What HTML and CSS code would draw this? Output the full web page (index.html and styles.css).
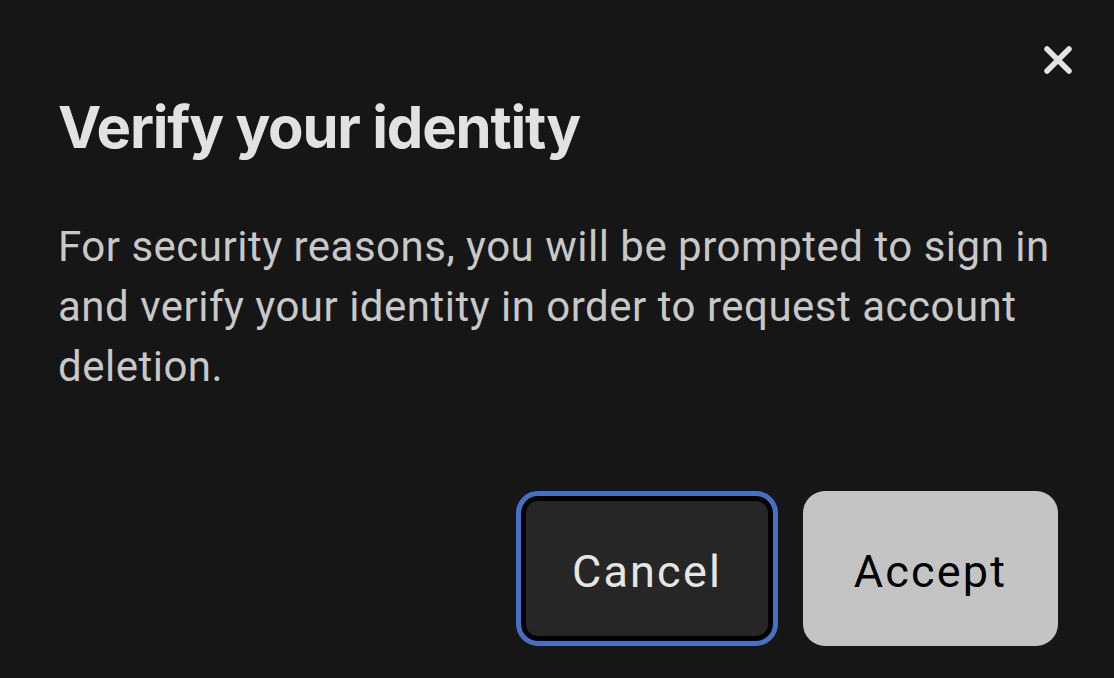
FILE: index.html
```html
<!DOCTYPE html>
<html lang="en">
<head>
<meta charset="utf-8">
<title>Verify your identity</title>
<link rel="stylesheet" href="styles.css">
</head>
<body>
<div class="dialog" role="dialog" aria-labelledby="dlg-title">
  <div class="dialog-header">
    <button class="close-btn" aria-label="Close">
      <svg viewBox="0 0 30 30" width="30" height="30" aria-hidden="true">
        <path d="M4 4 L26 26 M26 4 L4 26" stroke="currentColor" stroke-width="5.5" stroke-linecap="round" fill="none"/>
      </svg>
    </button>
  </div>
  <h1 class="dialog-title" id="dlg-title">Verify your identity</h1>
  <p class="dialog-text">For security reasons, you will be prompted to sign in and verify your identity in order to request account deletion.</p>
  <div class="dialog-actions">
    <button class="btn btn-secondary">Cancel</button>
    <button class="btn btn-primary">Accept</button>
  </div>
</div>
</body>
</html>
```
FILE: styles.css
```css
html, body {
  margin: 0;
  padding: 0;
  background: #161616;
  height: 100%;
}

.dialog {
  display: flex;
  flex-direction: column;
  padding: 0 56px 0 58px;
  font-family: Roboto, "Noto Sans", sans-serif;
}

.dialog-header {
  display: flex;
  justify-content: flex-end;
  padding-top: 36px;
  margin-right: -24px;
}

.close-btn {
  width: 48px;
  height: 48px;
  padding: 0;
  border: 0;
  background: transparent;
  color: #e4e4e4;
  display: flex;
  align-items: center;
  justify-content: center;
  cursor: pointer;
}

.dialog-title {
  margin: 8px 0 0;
  font-family: Inter, "Noto Sans", sans-serif;
  font-size: 58px;
  line-height: 70px;
  font-weight: 700;
  color: #e2e2e2;
  letter-spacing: -1.2px;
}

.dialog-text {
  margin: 55px 0 0;
  font-size: 42px;
  line-height: 60px;
  font-weight: 400;
  color: #c8c8c8;
  letter-spacing: 0.5px;
}

.dialog-actions {
  display: flex;
  justify-content: flex-end;
  gap: 25px;
  margin-top: 94px;
}

.btn {
  height: 155px;
  padding: 5px 0 0;
  border-radius: 22px;
  font-family: Roboto, "Noto Sans", sans-serif;
  font-size: 45px;
  font-weight: 400;
  letter-spacing: 2.2px;
  cursor: pointer;
}

.btn-secondary {
  width: 262px;
  background: #262626;
  color: #e6e6e6;
  border: 5px solid #4671c2;
  box-shadow: inset 0 0 0 5px #000;
}

.btn-primary {
  width: 255px;
  background: #c4c4c4;
  color: #000;
  border: 0;
}
```
